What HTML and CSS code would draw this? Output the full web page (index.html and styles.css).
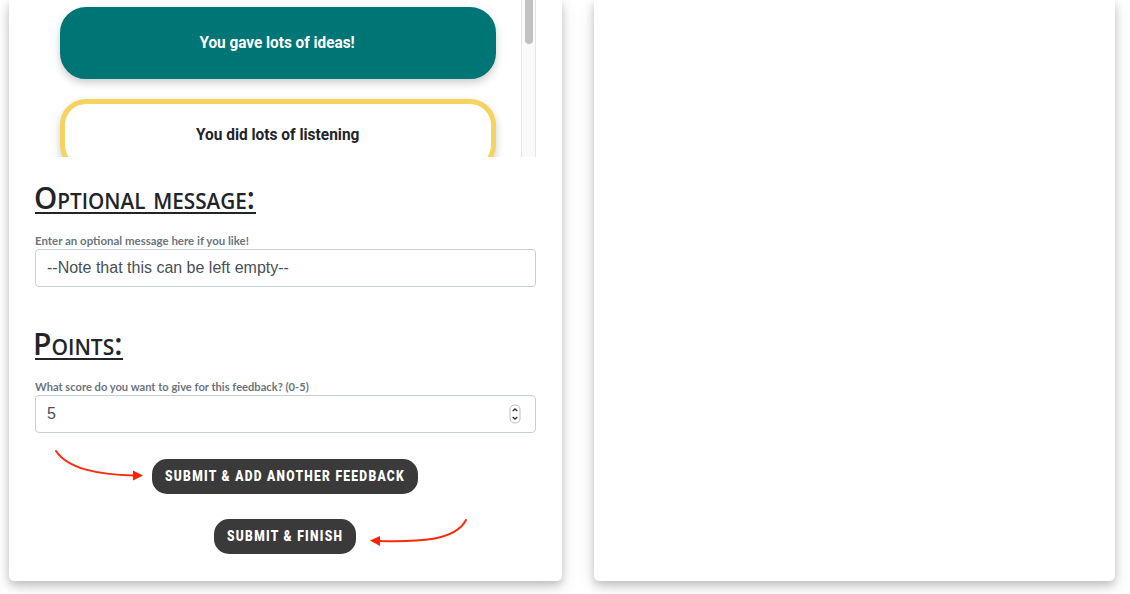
FILE: index.html
```html
<!DOCTYPE html>
<html lang="en">
<head>
<meta charset="utf-8">
<title>Give feedback</title>
<link rel="stylesheet" href="styles.css">
</head>
<body>
<main class="page">
  <section class="card form-card">
    <div class="choices">
      <div class="choice-list">
        <div class="choice selected"><span class="ideas">You gave lots of ideas!</span></div>
        <div class="choice"><span class="listening">You did lots of listening</span></div>
      </div>
      <div class="scrollbar"><div class="thumb"></div></div>
    </div>
    <h2 class="heading message-heading"><span>Optional message:</span></h2>
    <div class="label"><span class="message-label">Enter an optional message here if you like!</span></div>
    <div class="field"><span class="note">--Note that this can be left empty--</span></div>
    <h2 class="heading points-heading"><span>Points:</span></h2>
    <div class="label"><span class="score-label">What score do you want to give for this feedback? (0-5)</span></div>
    <div class="field"><span>5</span>
      <svg class="stepper" width="12" height="20" viewBox="0 0 12 20"><rect x="1" y="1" width="10" height="18" rx="4.5" fill="#fff" stroke="#bbb"/><path d="M3.7 7 6 4.9 8.300 7M3.700 13 6 15.100 8.300 13" fill="none" stroke="#333" stroke-width="1.400"/></svg>
    </div>
    <div class="actions">
      <button class="button add"><span>SUBMIT &amp; ADD ANOTHER FEEDBACK</span></button>
      <button class="button finish"><span>SUBMIT &amp; FINISH</span></button>
      <svg class="arrows" width="500" height="120" viewBox="30 440 500 120"><path d="M56 451C68 469 98 474.500 134 475.500M466 520C455 541 418 542 379 541" fill="none" stroke="#ff2a0a" stroke-width="2" stroke-linecap="round"/><path d="M133 470.500 143 475.500 133 480.500ZM380 536 370 540.500 380 546Z" fill="#ff2200"/></svg>
    </div>
  </section>
  <section class="card side-card"></section>
</main>
</body>
</html>
```
FILE: styles.css
```css
* { box-sizing: border-box; }
body { margin: 0; background: #fff; overflow: hidden; color: #212529; }
.page { display: flex; gap: 32px; height: 594px; padding-left: 9px; }
.card { height: 581px; background: #fff; border-radius: 0 0 5px 5px; box-shadow: 0 4px 8px rgba(0,0,0,.2), 0 6px 20px rgba(0,0,0,.1); }
.form-card { width: 553px; padding: 0 26px; }
.side-card { width: 521px; }
.choices { display: flex; justify-content: space-between; height: 157px; overflow: hidden; }
.choice-list { display: flex; flex-direction: column; gap: 20px; padding: 7px 0 0 25px; }
.choice { flex: none; display: flex; align-items: center; justify-content: center; width: 436px; height: 72px; border: 5px solid #f6d35f; border-radius: 26px; background: #fff; box-shadow: 0 4px 8px rgba(0,0,0,.2); font: bold 16px/24px Roboto, sans-serif; }
.choice.selected { background: #007575; border-color: #007575; color: #fff; }
.choice span { white-space: nowrap; }
.ideas { transform: translateX(-1px) scaleX(.957); }
.listening { transform: scaleX(.966); }
.scrollbar { width: 15px; height: 157px; background: #fafafa; border: solid #e5e5e5; border-width: 0 1px; }
.thumb { width: 8px; height: 44px; margin-left: 3px; background: #c1c1c1; border-radius: 0 0 4px 4px; }
.heading { height: 32px; margin: 25px 0 19px; border-bottom: 2px solid #212529; font: 600 30px/32px "Open Sans", sans-serif; font-variant: small-caps; white-space: nowrap; }
.heading span, .label span, .field span, .button span { display: inline-block; transform-origin: left center; }
.message-heading { width: 221px; }
.message-heading span { transform: translateX(-1px) scaleX(.986); }
.points-heading { width: 88px; margin-top: 41px; }
.points-heading span { transform: translateX(-2px) scaleX(1); }
.label { height: 16px; font: bold 12px/15px Lato, sans-serif; color: #6c757d; white-space: nowrap; }
.message-label { transform: scaleX(.955); }
.score-label { transform: scaleX(.929); }
.field { display: flex; align-items: center; justify-content: space-between; width: 501px; height: 38px; padding: 0 14px 0 11px; border: 1px solid #c8ced8; border-radius: 4px; color: #495057; font: 16px/24px "Liberation Sans", sans-serif; }
.heading + .label { margin-left: -.5px; }
.actions { position: relative; display: flex; flex-direction: column; align-items: center; gap: 25px; padding: 26px 1px 0 0; }
.button { display: flex; align-items: center; height: 35px; padding: 0 0 1px 13px; border: 0; border-radius: 15px; background: #3a3a3a; color: #fff; font: 900 14px/20px Roboto, sans-serif; letter-spacing: 1.5px; white-space: nowrap; }
.add { width: 266px; }
.finish { width: 142px; }
.button span { transform: scaleX(.859); }
.arrows { position: absolute; left: -5px; top: 7px; }
```
